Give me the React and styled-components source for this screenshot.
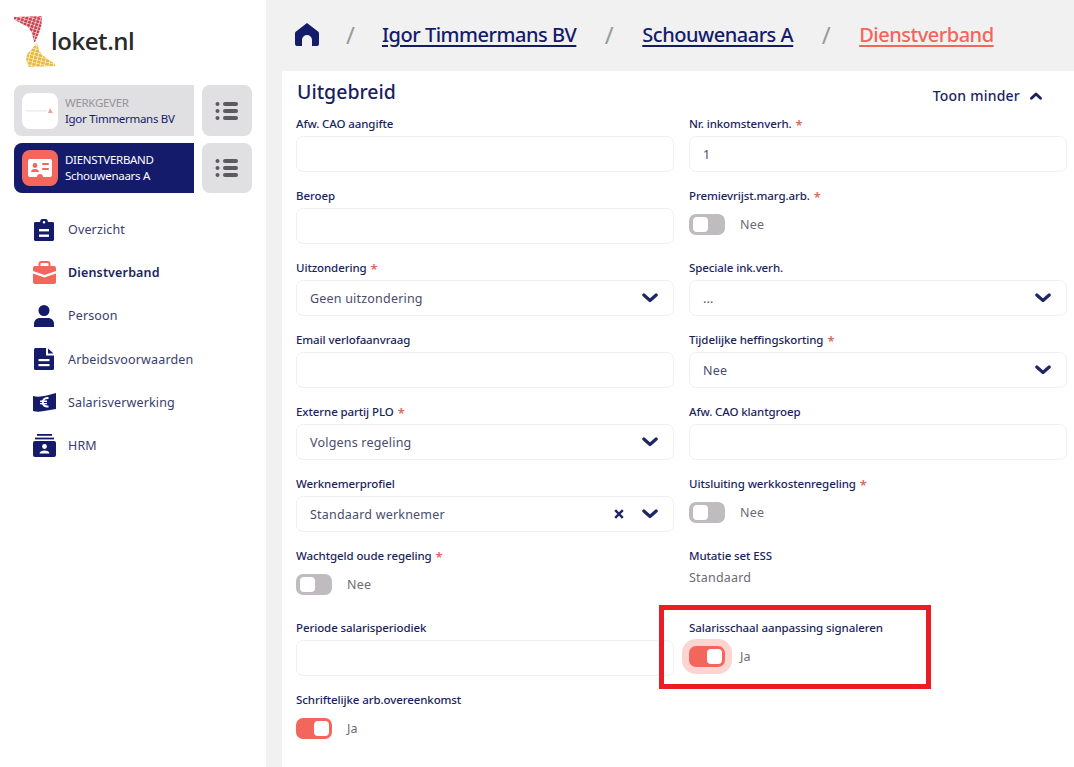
import styled, { createGlobalStyle } from 'styled-components';

const NAVY = '#141b6b';
const CORAL = '#f2665c';
const INK = '#1b1f5e';

const GlobalStyle = createGlobalStyle`
  html, body {
    margin: 0;
    padding: 0;
    background: #f1f1f1;
  }
  * {
    box-sizing: border-box;
  }
  body {
    font-family: "Noto Sans", "Open Sans", sans-serif;
  }
`;

const Page = styled.div`
  display: flex;
  width: 1074px;
  height: 767px;
  overflow: hidden;
`;

const Sidebar = styled.aside`
  width: 266px;
  flex: none;
  background: #fff;
  padding: 16px 14px 0;
`;

const LogoRow = styled.div`
  display: flex;
  align-items: center;
  height: 52px;
  margin-bottom: 17px;
`;

const LogoText = styled.span`
  font-family: "Open Sans", sans-serif;
  font-size: 24px;
  font-weight: 600;
  color: #2a2a2a;
  letter-spacing: -0.45px;
  margin-left: -7px;
  margin-top: -3px;
`;

const ContextRow = styled.div`
  display: flex;
  gap: 8px;
  margin-bottom: 7px;
`;

const ContextCard = styled.div`
  display: flex;
  align-items: center;
  gap: 7px;
  width: 180px;
  height: ${(p) => (p.$active ? 50 : 51)}px;
  padding-left: 8px;
  border-radius: 8px 0 0 8px;
  background: ${(p) => (p.$active ? NAVY : '#e0dfe1')};
`;

const ContextThumb = styled.div`
  display: flex;
  align-items: center;
  justify-content: center;
  width: 36px;
  height: 36px;
  border-radius: 8px;
  background: ${(p) => (p.$active ? CORAL : '#fff')};
`;

const ContextText = styled.div`
  font-size: 11.5px;
  line-height: 16px;
  letter-spacing: -0.3px;
  color: ${(p) => (p.$active ? '#fff' : NAVY)};
`;

const ContextKind = styled.div`
  color: ${(p) => (p.$active ? '#fff' : '#97939a')};
`;

const MenuButton = styled.div`
  display: flex;
  align-items: center;
  justify-content: center;
  width: 50px;
  border-radius: 8px;
  background: #e0dfe1;
`;

const Nav = styled.nav`
  display: flex;
  flex-direction: column;
  margin-top: 15px;
`;

const NavItem = styled.div`
  display: flex;
  align-items: center;
  height: 43.2px;
  padding-left: 17px;
  font-size: 12.5px;
  letter-spacing: 0.15px;
  font-weight: ${(p) => (p.$active ? 600 : 400)};
  color: ${(p) => (p.$active ? INK : '#3a3d6c')};
`;

const NavIcon = styled.span`
  display: flex;
  justify-content: center;
  width: 26px;
  margin-right: 11px;
`;

const Main = styled.main`
  flex: 1;
  display: flex;
  flex-direction: column;
  min-width: 0;
  padding-left: 16px;
`;

const Crumbs = styled.header`
  display: flex;
  align-items: center;
  height: 71px;
  padding: 0 0 2px 13px;
  font-size: 20px;
  font-weight: 500;
`;

const Crumb = styled.a`
  color: ${(p) => (p.$current ? CORAL : NAVY)};
  text-decoration: underline;
  text-underline-offset: 3px;
  letter-spacing: -0.48px;
`;

const Slash = styled.span`
  color: #9a9a9a;
  font-size: 24px;
  font-weight: 400;
  margin: 0 ${(p) => p.$gap || 28.5}px;
`;

const Panel = styled.section`
  position: relative;
  flex: 1;
  background: #fff;
  padding: 8px 7px 0 14px;
`;

const PanelHead = styled.div`
  display: flex;
  justify-content: space-between;
  align-items: flex-start;
  height: 34px;
`;

const PanelTitle = styled.h2`
  margin: 0 0 0 1px;
  font-size: 19.5px;
  line-height: 26px;
  font-weight: 500;
  color: ${INK};
`;

const ToggleMore = styled.div`
  display: flex;
  align-items: center;
  gap: 10px;
  margin: 5px 25px 0 0;
  font-size: 14px;
  font-weight: 500;
  letter-spacing: 0.22px;
  line-height: 24px;
  color: ${INK};
`;

const Fields = styled.div`
  display: grid;
  grid-template-columns: 378px 378px;
  grid-auto-rows: 72px;
  column-gap: 15px;
`;

const Field = styled.div`
  display: flex;
  flex-direction: column;
`;

const Label = styled.label`
  display: block;
  height: 23px;
  font-size: 11.5px;
  line-height: 21px;
  font-weight: 500;
  letter-spacing: -0.1px;
  color: ${INK};
`;

const Required = styled.span`
  position: relative;
  top: 2px;
  margin-left: 4px;
  font-size: 13px;
  font-weight: 600;
  color: #e2635c;
`;

const InputBox = styled.div`
  display: flex;
  align-items: center;
  height: 36px;
  padding: 0 14px 0 13px;
  border: 1px solid #f0eff1;
  border-radius: 7px;
  background: #fff;
  font-size: 12.5px;
  letter-spacing: 0.2px;
  color: #4a4c6c;
`;

const InputValue = styled.span`
  flex: 1;
`;

const SelectIcons = styled.span`
  display: flex;
  align-items: center;
  gap: 18px;
  margin-right: 1px;
`;

const SwitchRow = styled.div`
  display: flex;
  align-items: center;
  gap: 15px;
  height: 21px;
  margin-top: 6px;
  font-size: 12.5px;
  letter-spacing: 0.2px;
  color: #6d6a72;
`;

const Track = styled.span`
  display: flex;
  justify-content: ${(p) => (p.$on ? 'flex-end' : 'flex-start')};
  align-items: center;
  width: 36px;
  height: 21px;
  padding: 0 3px 0 4px;
  border-radius: 7px;
  background: ${(p) => (p.$on ? CORAL : '#bfbbbf')};
  box-shadow: ${(p) => (p.$focus ? '0 0 0 7px #fcd5d1' : 'none')};
`;

const Knob = styled.span`
  width: 15px;
  height: 15px;
  border-radius: 4px;
  background: #fff;
`;

const ReadValue = styled.div`
  font-size: 12.5px;
  letter-spacing: 0.2px;
  color: #6d6a72;
  line-height: 18px;
  margin-top: 1px;
`;

const Highlight = styled.div`
  position: absolute;
  left: 377px;
  top: 534px;
  width: 272px;
  height: 84px;
  border: 5px solid #ed1c24;
`;

const fields = [
  { label: 'Afw. CAO aangifte', type: 'input' },
  { label: 'Nr. inkomstenverh.', req: true, type: 'input', value: '1' },
  { label: 'Beroep', type: 'input' },
  { label: 'Premievrijst.marg.arb.', req: true, type: 'switch' },
  { label: 'Uitzondering', req: true, type: 'select', value: 'Geen uitzondering' },
  { label: 'Speciale ink.verh.', type: 'select', value: '...' },
  { label: 'Email verlofaanvraag', type: 'input' },
  { label: 'Tijdelijke heffingskorting', req: true, type: 'select', value: 'Nee' },
  { label: 'Externe partij PLO', req: true, type: 'select', value: 'Volgens regeling' },
  { label: 'Afw. CAO klantgroep', type: 'input' },
  { label: 'Werknemerprofiel', type: 'select', value: 'Standaard werknemer', clear: true },
  { label: 'Uitsluiting werkkostenregeling', req: true, type: 'switch' },
  { label: 'Wachtgeld oude regeling', req: true, type: 'switch' },
  { label: 'Mutatie set ESS', type: 'read', value: 'Standaard' },
  { label: 'Periode salarisperiodiek', type: 'input' },
  { label: 'Salarisschaal aanpassing signaleren', type: 'switch', on: true, focus: true },
  { label: 'Schriftelijke arb.overeenkomst', type: 'switch', on: true },
];

const ChevronDown = () => (
  <svg width="16" height="10" viewBox="0 0 16 10" aria-hidden="true">
    <path d="M1.8 2 L8 7.5 L14.2 2" fill="none" stroke="#1f2566" strokeWidth="3.2" strokeLinecap="round" strokeLinejoin="round" />
  </svg>
);

const ChevronUp = () => (
  <svg width="12" height="8" viewBox="0 0 12 8" aria-hidden="true">
    <path d="M1.5 6.2 L6 2 L10.5 6.2" fill="none" stroke={INK} strokeWidth="2.8" strokeLinecap="round" strokeLinejoin="round" />
  </svg>
);

const ClearIcon = () => (
  <svg width="10" height="10" viewBox="0 0 10 10" aria-hidden="true">
    <path d="M1.2 1.2 L8.8 8.8 M8.8 1.2 L1.2 8.8" stroke="#1f2566" strokeWidth="2.4" />
  </svg>
);

const ListIcon = () => (
  <svg width="24" height="20" viewBox="0 0 24 20" fill="#5e585f" aria-hidden="true">
    <circle cx="2.5" cy="3" r="2" />
    <circle cx="2.5" cy="10" r="2" />
    <circle cx="2.5" cy="17" r="2" />
    <rect x="8" y="1" width="15" height="4" rx="2" />
    <rect x="8" y="8" width="15" height="4" rx="2" />
    <rect x="8" y="15" width="15" height="4" rx="2" />
  </svg>
);

// mosaic wings: solid outlines with a tile grid laid over them
const Logo = () => (
  <svg width="44" height="52" viewBox="0 0 44 52" aria-hidden="true">
    <defs>
      <pattern id="redTiles" width="3.8" height="3.2" patternUnits="userSpaceOnUse" patternTransform="rotate(18)">
        <rect width="3.8" height="3.2" fill="#fff" />
        <rect width="3.2" height="2.7" fill="#c8434f" />
      </pattern>
      <pattern id="yellowTiles" width="4.2" height="3.4" patternUnits="userSpaceOnUse" patternTransform="rotate(14)">
        <rect width="4.2" height="3.4" fill="#fff" />
        <rect width="3.6" height="2.9" fill="#e9b93c" />
      </pattern>
    </defs>
    <path d="M0 1 L28 0 L27.5 9 L25 17 L21 26 L20 26 L18 17 L14 11 L0 3.5 Z" fill="url(#redTiles)" />
    <path d="M23 27 L25 34 L28 39 L41 48 L41 50 L15 51 L12 44 L13 38 L17 34 Z" fill="url(#yellowTiles)" />
  </svg>
);

const EmployerThumb = () => (
  <svg width="30" height="8" viewBox="0 0 30 8" aria-hidden="true">
    <rect x="1" y="3.2" width="21" height="1.4" fill="#ecebee" />
    <path d="M25 1 L28 6 L23 6 Z" fill="#eba49c" />
  </svg>
);

const ContractThumb = () => (
  <svg width="24" height="20" viewBox="0 0 24 20" aria-hidden="true">
    <path d="M2 1 H22 A2 2 0 0 1 24 3 V17 A2 2 0 0 1 22 19 H15 A3 3 0 0 0 9 19 H2 A2 2 0 0 1 0 17 V3 A2 2 0 0 1 2 1 Z" fill="#fff" />
    <circle cx="7" cy="7.5" r="2.4" fill={CORAL} />
    <path d="M3 14 C3 10 11 10 11 14 Z" fill={CORAL} />
    <rect x="14" y="5" width="7" height="2" rx="1" fill={CORAL} />
    <rect x="14" y="10" width="7" height="2" rx="1" fill={CORAL} />
  </svg>
);

const ClipboardIcon = () => (
  <svg width="20" height="22" viewBox="0 0 20 22" aria-hidden="true">
    <path fillRule="evenodd" d="M2 3 H6 A4 3.4 0 0 1 14 3 H18 A1.8 1.8 0 0 1 20 5 V20 A1.8 1.8 0 0 1 18 22 H2 A1.8 1.8 0 0 1 0 20 V5 A1.8 1.8 0 0 1 2 3 Z M8.7 3.2 A1.3 1.3 0 1 0 11.3 3.2 A1.3 1.3 0 1 0 8.7 3.2 Z" fill={NAVY} />
    <rect x="5" y="10" width="10" height="2.4" fill="#fff" />
    <rect x="5" y="15.5" width="10" height="2.4" fill="#fff" />
  </svg>
);

const CaseIcon = () => (
  <svg width="23" height="23" viewBox="0 0 23 23" aria-hidden="true">
    <path d="M6.5 5 V3 A2 2 0 0 1 8.5 1 H14.5 A2 2 0 0 1 16.5 3 V5" fill="none" stroke={CORAL} strokeWidth="2" />
    <path d="M2 5 H21 A2 2 0 0 1 23 7 V10 L11.5 14 L0 10 V7 A2 2 0 0 1 2 5 Z" fill={CORAL} />
    <path d="M0 12.5 L11.5 16.5 L23 12.5 V21 A2 2 0 0 1 21 23 H2 A2 2 0 0 1 0 21 Z" fill={CORAL} />
  </svg>
);

const PersonIcon = () => (
  <svg width="20" height="22" viewBox="0 0 20 22" aria-hidden="true">
    <circle cx="10" cy="5.5" r="5.5" fill={NAVY} />
    <path d="M0 22 V19 C0 15 3 13 6 13 H14 C17 13 20 15 20 19 V22 Z" fill={NAVY} />
  </svg>
);

const DocIcon = () => (
  <svg width="20" height="22" viewBox="0 0 20 22" aria-hidden="true">
    <path d="M1.5 0 H12 V7.5 H20 V20.5 A1.5 1.5 0 0 1 18.5 22 H1.5 A1.5 1.5 0 0 1 0 20.5 V1.5 A1.5 1.5 0 0 1 1.5 0 Z" fill={NAVY} />
    <path d="M14 0.5 L19.5 5.5 H14 Z" fill={NAVY} />
    <rect x="4.5" y="11" width="11" height="2.2" fill="#fff" />
    <rect x="4.5" y="16" width="11" height="2.2" fill="#fff" />
  </svg>
);

const MoneyIcon = () => (
  <svg width="23" height="19" viewBox="0 0 23 19" aria-hidden="true">
    <path d="M0 3 C7 5 15 2 23 0 V16 C15 17 7 20 0 18 Z" fill={NAVY} />
    <path d="M15.5 5 C12 4.6 9.8 6.6 9.8 9.3 C9.8 12 12 14 15.5 13.4" fill="none" stroke="#fff" strokeWidth="2" />
    <path d="M7 8.2 H14 M7 10.6 H14" stroke="#fff" strokeWidth="1.4" />
  </svg>
);

const HrmIcon = () => (
  <svg width="23" height="23" viewBox="0 0 23 23" aria-hidden="true">
    <rect x="4" y="0" width="15" height="1.8" fill={NAVY} />
    <rect x="2" y="3.6" width="19" height="1.8" fill={NAVY} />
    <rect x="0" y="7" width="23" height="16" rx="2" fill={NAVY} />
    <circle cx="11.5" cy="12.5" r="2.4" fill="#fff" />
    <path d="M6.5 19.5 C6.5 15.5 16.5 15.5 16.5 19.5 Z" fill="#fff" />
  </svg>
);

const HomeIcon = () => (
  <svg width="24" height="23" viewBox="0 0 24 23" aria-hidden="true">
    <path fillRule="evenodd" d="M12 0 L23 8.5 C23.7 9 24 9.6 24 10.5 V21 A2 2 0 0 1 22 23 H17 V17 A5 5 0 0 0 7 17 V23 H2 A2 2 0 0 1 0 21 V10.5 C0 9.6 0.3 9 1 8.5 Z" fill={NAVY} />
  </svg>
);

const navItems = [
  { label: 'Overzicht', icon: <ClipboardIcon /> },
  { label: 'Dienstverband', icon: <CaseIcon />, active: true },
  { label: 'Persoon', icon: <PersonIcon /> },
  { label: 'Arbeidsvoorwaarden', icon: <DocIcon /> },
  { label: 'Salarisverwerking', icon: <MoneyIcon /> },
  { label: 'HRM', icon: <HrmIcon /> },
];

const FormField = ({ field }) => (
  <Field>
    <Label>
      {field.label}
      {field.req && <Required>*</Required>}
    </Label>
    {field.type === 'input' && <InputBox>{field.value}</InputBox>}
    {field.type === 'select' && (
      <InputBox>
        <InputValue>{field.value}</InputValue>
        <SelectIcons>
          {field.clear && <ClearIcon />}
          <ChevronDown />
        </SelectIcons>
      </InputBox>
    )}
    {field.type === 'switch' && (
      <SwitchRow>
        <Track $on={field.on} $focus={field.focus}><Knob /></Track>
        {field.on ? 'Ja' : 'Nee'}
      </SwitchRow>
    )}
    {field.type === 'read' && <ReadValue>{field.value}</ReadValue>}
  </Field>
);

const App = () => (
  <Page>
    <GlobalStyle />
    <Sidebar>
      <LogoRow>
        <Logo />
        <LogoText>loket.nl</LogoText>
      </LogoRow>
      <ContextRow>
        <ContextCard>
          <ContextThumb><EmployerThumb /></ContextThumb>
          <ContextText>
            <ContextKind>WERKGEVER</ContextKind>
            Igor Timmermans BV
          </ContextText>
        </ContextCard>
        <MenuButton><ListIcon /></MenuButton>
      </ContextRow>
      <ContextRow>
        <ContextCard $active>
          <ContextThumb $active><ContractThumb /></ContextThumb>
          <ContextText $active>
            <ContextKind $active>DIENSTVERBAND</ContextKind>
            Schouwenaars A
          </ContextText>
        </ContextCard>
        <MenuButton><ListIcon /></MenuButton>
      </ContextRow>
      <Nav>
        {navItems.map((item) => (
          <NavItem key={item.label} $active={item.active}>
            <NavIcon>{item.icon}</NavIcon>
            {item.label}
          </NavItem>
        ))}
      </Nav>
    </Sidebar>
    <Main>
      <Crumbs>
        <HomeIcon />
        <Slash $gap={27}>/</Slash>
        <Crumb>Igor Timmermans BV</Crumb>
        <Slash>/</Slash>
        <Crumb>Schouwenaars A</Crumb>
        <Slash>/</Slash>
        <Crumb $current>Dienstverband</Crumb>
      </Crumbs>
      <Panel>
        <PanelHead>
          <PanelTitle>Uitgebreid</PanelTitle>
          <ToggleMore>
            Toon minder
            <ChevronUp />
          </ToggleMore>
        </PanelHead>
        <Fields>
          {fields.map((field) => <FormField key={field.label} field={field} />)}
        </Fields>
        <Highlight />
      </Panel>
    </Main>
  </Page>
);

export default App;
